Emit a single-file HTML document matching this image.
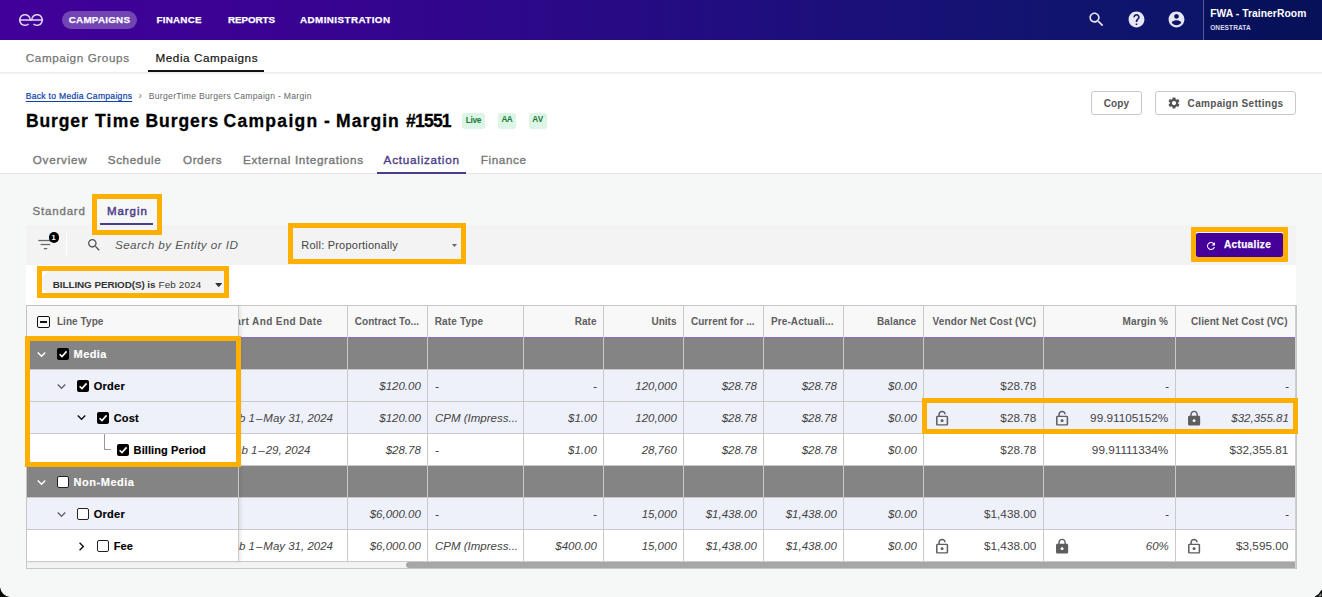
<!DOCTYPE html>
<html lang="en"><head><meta charset="utf-8"><title>Burger Time Burgers Campaign - Margin #1551</title>
<style>
*{box-sizing:border-box;margin:0;padding:0}
html,body{width:1322px;height:597px;overflow:hidden}
body{position:relative;background:#f6f7f7;font-family:"Liberation Sans",sans-serif;}
.a{position:absolute}
.t{position:absolute;white-space:nowrap;line-height:16px;height:16px}
svg{position:absolute;display:block;overflow:visible}
.nav{left:0;top:0;width:1322px;height:40px;background:linear-gradient(90deg,#41009a 0%,#390392 22%,#210d80 55%,#11146f 80%,#081563 100%)}
.pill{left:62px;top:11px;width:75px;height:18px;border-radius:9px;background:rgba(255,255,255,.27)}
.navdiv{left:1203px;top:0;width:1px;height:40px;background:rgba(255,255,255,.3)}
.subnav{left:0;top:40px;width:1322px;height:33px;background:#fff}
.subshadow{left:0;top:72px;width:1322px;height:3px;background:linear-gradient(180deg,rgba(0,0,0,.10),rgba(0,0,0,.04) 45%,rgba(0,0,0,0))}
.hdr{left:0;top:73px;width:1322px;height:101px;background:#fff;border-bottom:1px solid #e6e6e6}
.ul{height:2px}
.btn{border:1px solid #c8c8c8;border-radius:3px;background:#fff;height:24px;top:91px}
.badge{top:113px;height:16px;border-radius:3px;background:#dcf5e5}
.hl{border:5px solid #ffaf00;z-index:5}
.toolbar{left:26px;top:225px;width:1270px;height:40px;background:#f3f3f3}
.filterrow{left:26px;top:265px;width:1270px;height:41px;background:#fff}
.chip{left:42px;top:271px;width:188px;height:22px;border-radius:9px;background:#f3f3f3}
/* table */
.tbl{left:26px;top:305px;width:1271px;height:264px;border:1px solid #c6c6c6;background:#fff}
.row{left:27px;width:1269px;height:32px;border-bottom:1px solid #c9c9c9}
.thead{left:27px;top:306px;width:1269px;height:32px;background:#f8f8f8;border-bottom:1px solid #8d68c8}
.g{background:#848484}
.l{background:#eef0fa}
.w{background:#fff}
.vl{top:306px;width:1px;height:256px;background:#c9c9c9}
.pin{left:27px;top:306px;width:212px;height:256px;border-right:1px solid #c9c9c9;z-index:2;box-shadow:2px 0 3px rgba(0,0,0,.08)}
.cb{width:12px;height:12px;border-radius:2px;z-index:3}
.cb.on{background:#000}
.cb.off{background:#fff;border:1.3px solid #222}

</style></head>
<body>
<nav aria-label="Main navigation">
<!-- top navigation -->
<div class="a nav"></div>
<svg style="left:0;top:0" width="62" height="40" viewBox="0 0 62 40" fill="none" stroke="#e2d8f4" stroke-width="1.500" stroke-linecap="round">
  <path d="M19.700 20 H42.300"/>
  <path d="M30.300 20 A5.300 5.300 0 1 0 28.040 24.340"/>
  <path d="M31.700 20 A5.300 5.300 0 1 1 33.960 24.340"/>
</svg>
<div class="a pill"></div>
<svg style="left:1087px;top:10.400px" width="19" height="19" viewBox="0 0 24 24" fill="#e6e6f5"><path d="M15.5 14h-.79l-.28-.27C15.41 12.59 16 11.11 16 9.5 16 5.91 13.09 3 9.500 3S3 5.910 3 9.500 5.910 16 9.500 16c1.610 0 3.090-.59 4.230-1.570l.27.28v.79l5 4.990L20.490 19l-4.990-5zm-6 0C7.010 14 5 11.990 5 9.500S7.010 5 9.500 5 14 7.010 14 9.500 11.990 14 9.500 14z"/></svg>
<svg style="left:1127px;top:10.400px" width="19" height="19" viewBox="0 0 24 24" fill="#e6e6f5"><path d="M12 2C6.480 2 2 6.480 2 12s4.480 10 10 10 10-4.480 10-10S17.520 2 12 2zm1 17h-2v-2h2v2zm2.070-7.750l-.9.920C13.450 12.900 13 13.500 13 15h-2v-.5c0-1.100.45-2.100 1.170-2.830l1.240-1.260c.37-.36.59-.86.59-1.410 0-1.100-.9-2-2-2s-2 .9-2 2H8c0-2.210 1.790-4 4-4s4 1.790 4 4c0 .88-.36 1.680-.93 2.250z"/></svg>
<svg style="left:1167px;top:10.400px" width="19" height="19" viewBox="0 0 24 24" fill="#e6e6f5"><path d="M12 2C6.480 2 2 6.480 2 12s4.480 10 10 10 10-4.480 10-10S17.520 2 12 2zm0 3c1.660 0 3 1.340 3 3s-1.340 3-3 3-3-1.340-3-3 1.340-3 3-3zm0 14.200c-2.500 0-4.710-1.280-6-3.220.03-1.990 4-3.080 6-3.080 1.990 0 5.970 1.090 6 3.080-1.290 1.940-3.500 3.220-6 3.220z"/></svg>
<div class="a navdiv"></div>
<div class="a" style="left:1204px;top:0;width:118px;height:40px;background:rgba(0,8,60,.25)"></div>
<span class="t" style="top:11.90px;font-size:9.8px;color:#fff;font-weight:700;-webkit-text-stroke:0.25px currentColor;left:68.75px;letter-spacing:0.262px;">CAMPAIGNS</span>
<span class="t" style="top:11.90px;font-size:9.8px;color:#fff;font-weight:700;-webkit-text-stroke:0.25px currentColor;left:156.50px;letter-spacing:0.242px;">FINANCE</span>
<span class="t" style="top:11.90px;font-size:9.8px;color:#fff;font-weight:700;-webkit-text-stroke:0.25px currentColor;left:228.00px;letter-spacing:-0.060px;">REPORTS</span>
<span class="t" style="top:11.90px;font-size:9.8px;color:#fff;font-weight:700;-webkit-text-stroke:0.25px currentColor;left:300.00px;letter-spacing:0.447px;">ADMINISTRATION</span>
<span class="t" style="top:5.83px;font-size:10.3px;color:#fff;font-weight:700;left:1210.20px;letter-spacing:0.059px;">FWA - TrainerRoom</span>
<span class="t" style="top:20.15px;font-size:6.5px;color:#dcdcf2;font-weight:700;left:1210.20px;letter-spacing:0.114px;">ONESTRATA</span>
</nav>
<nav aria-label="Campaign sections">
<!-- sub navigation -->
<div class="a subnav"></div>
<div class="a ul" style="left:148px;top:70px;width:116px;background:#111"></div>
<span class="t" style="top:49.95px;font-size:11.7px;color:#757575;-webkit-text-stroke:0.25px currentColor;left:25.75px;letter-spacing:0.599px;">Campaign Groups</span>
<span class="t" style="top:49.95px;font-size:11.7px;color:#111;-webkit-text-stroke:0.2px currentColor;left:155.50px;letter-spacing:0.557px;">Media Campaigns</span>
</nav>
<header aria-label="Campaign header">
<!-- page header -->
<div class="a hdr"></div>
<div class="a subshadow"></div>
<div class="a badge" style="left:462px;width:23px"></div>
<div class="a badge" style="left:498px;width:18px"></div>
<div class="a badge" style="left:529px;width:18px"></div>
<div class="a btn" style="left:1091px;width:51px"></div>
<div class="a btn" style="left:1155px;width:141px"></div>
<svg style="left:1167.400px;top:96.400px" width="14" height="14" viewBox="0 0 24 24" fill="#555"><path d="M19.140 12.940c.04-.3.06-.61.06-.94 0-.32-.02-.64-.07-.94l2.030-1.580c.18-.14.23-.41.12-.61l-1.920-3.320c-.12-.22-.37-.29-.59-.22l-2.390.96c-.5-.38-1.030-.7-1.620-.94l-.36-2.540c-.04-.24-.24-.41-.48-.41h-3.840c-.24 0-.43.17-.47.41l-.36 2.540c-.59.24-1.130.57-1.620.94l-2.390-.96c-.22-.08-.47 0-.59.22L2.740 8.870c-.12.21-.08.47.12.61l2.030 1.580c-.05.3-.09.63-.09.94s.02.64.07.94l-2.030 1.580c-.18.14-.23.41-.12.61l1.920 3.320c.12.22.37.29.59.22l2.390-.96c.5.38 1.030.7 1.620.94l.36 2.540c.05.24.24.41.48.41h3.840c.24 0 .44-.17.47-.41l.36-2.540c.59-.24 1.130-.56 1.620-.94l2.390.96c.22.08.47 0 .59-.22l1.920-3.320c.12-.22.07-.47-.12-.61l-2.010-1.580zM12 15.600c-1.980 0-3.600-1.620-3.600-3.600s1.620-3.600 3.600-3.600 3.600 1.620 3.600 3.600-1.620 3.600-3.600 3.600z"/></svg>
<div class="a ul" style="left:377px;top:172px;width:89px;background:#4c3b88;z-index:2"></div>
<span class="t" style="top:87.62px;font-size:8.6px;color:#0f41ab;-webkit-text-stroke:0.2px currentColor;left:25.75px;letter-spacing:0.270px;text-decoration:underline;text-underline-offset:1.5px;">Back to Media Campaigns</span>
<span class="t" style="top:87.63px;font-size:10px;color:#777;left:138.50px;">›</span>
<span class="t" style="top:87.62px;font-size:8.6px;color:#666;left:148.75px;letter-spacing:0.292px;">BurgerTime Burgers Campaign - Margin</span>
<span class="t" style="top:112.94px;font-size:17.5px;color:#000;font-weight:700;-webkit-text-stroke:0.3px currentColor;left:0;"><span style="position:absolute;left:26.00px;top:0;letter-spacing:0.885px">Burger</span> <span style="position:absolute;left:95.00px;top:0;letter-spacing:1.223px">Time</span> <span style="position:absolute;left:145.50px;top:0;letter-spacing:0.948px">Burgers</span> <span style="position:absolute;left:223.50px;top:0;letter-spacing:1.313px">Campaign</span> <span style="position:absolute;left:324.00px;top:0;letter-spacing:0.000px">-</span> <span style="position:absolute;left:336.00px;top:0;letter-spacing:1.085px">Margin</span> <span style="position:absolute;left:406.00px;top:0;letter-spacing:-0.768px">#1551</span></span>
<span class="t" style="top:112.19px;font-size:8.4px;color:#1a7a3c;font-weight:700;left:465.70px;letter-spacing:-0.355px;">Live</span>
<span class="t" style="top:112.26px;font-size:8.2px;color:#1a7a3c;font-weight:700;left:501.40px;letter-spacing:-0.528px;">AA</span>
<span class="t" style="top:112.26px;font-size:8.2px;color:#1a7a3c;font-weight:700;left:532.30px;letter-spacing:0.034px;">AV</span>
<span class="t" style="top:152.25px;font-size:11.7px;color:#777;-webkit-text-stroke:0.35px currentColor;left:32.75px;letter-spacing:0.754px;">Overview</span>
<span class="t" style="top:152.25px;font-size:11.7px;color:#777;-webkit-text-stroke:0.35px currentColor;left:107.75px;letter-spacing:0.607px;">Schedule</span>
<span class="t" style="top:152.25px;font-size:11.7px;color:#777;-webkit-text-stroke:0.35px currentColor;left:183.00px;letter-spacing:0.553px;">Orders</span>
<span class="t" style="top:152.25px;font-size:11.7px;color:#777;-webkit-text-stroke:0.35px currentColor;left:243.00px;letter-spacing:0.640px;">External Integrations</span>
<span class="t" style="top:152.25px;font-size:11.7px;color:#4c3b88;-webkit-text-stroke:0.35px currentColor;left:383.60px;letter-spacing:0.760px;">Actualization</span>
<span class="t" style="top:152.25px;font-size:11.7px;color:#777;-webkit-text-stroke:0.35px currentColor;left:480.70px;letter-spacing:0.618px;">Finance</span>
<span class="t" style="top:95.53px;font-size:10px;color:#555;font-weight:700;left:1103.80px;letter-spacing:0.067px;">Copy</span>
<span class="t" style="top:95.53px;font-size:10px;color:#555;font-weight:700;left:1187.60px;letter-spacing:0.314px;">Campaign Settings</span>
</header>
<section aria-label="Actualization toolbar">
<!-- sub tabs -->
<div class="a ul" style="left:100px;top:223px;width:53px;background:#4c3b88;z-index:6"></div>
<div class="a hl" style="left:92px;top:194px;width:70px;height:41px"></div>

<!-- toolbar -->
<div class="a toolbar"></div>
<svg style="left:36px;top:236px" width="20" height="16" viewBox="36 236 20 16" fill="#686868"><rect x="38.300" y="239.900" width="14.200" height="1.250"/><rect x="40.600" y="243.900" width="9.600" height="1.250"/><rect x="43.800" y="248" width="3.400" height="1.250"/></svg>
<div class="a" style="left:48.500px;top:232.300px;width:10.400px;height:10.400px;border-radius:50%;background:#000"></div>
<span class="t" style="left:51.600px;top:229.600px;font-size:7.500px;font-weight:700;color:#fff">1</span>
<div class="a" style="left:66px;top:233px;width:1px;height:24px;background:#fff"></div>
<svg style="left:86px;top:237px" width="16" height="16" viewBox="0 0 24 24" fill="#555"><path d="M15.500 14h-.79l-.28-.27C15.410 12.590 16 11.110 16 9.500 16 5.910 13.090 3 9.500 3S3 5.910 3 9.500 5.910 16 9.500 16c1.610 0 3.090-.59 4.230-1.570l.27.28v.79l5 4.990L20.490 19l-4.990-5zm-6 0C7.010 14 5 11.990 5 9.500S7.010 5 9.500 5 14 7.010 14 9.500 11.990 14 9.500 14z"/></svg>
<div class="a hl" style="left:288px;top:223px;width:178px;height:41px"></div>
<svg style="left:451.500px;top:244px" width="5" height="3" viewBox="0 0 10 6" fill="#666"><path d="M0 0h10L5 6z"/></svg>
<div class="a" style="left:1196px;top:233px;width:87px;height:24px;border-radius:2px;background:#440099"></div>
<div class="a hl" style="left:1191px;top:227px;width:97px;height:35px;border-radius:1px"></div>
<svg style="left:1204.800px;top:239.500px" width="12" height="12" viewBox="0 0 24 24" fill="#fff"><path d="M17.650 6.350C16.200 4.900 14.210 4 12 4c-4.420 0-7.990 3.580-7.990 8s3.570 8 7.990 8c3.730 0 6.840-2.550 7.730-6h-2.080c-.82 2.330-3.040 4-5.650 4-3.310 0-6-2.690-6-6s2.690-6 6-6c1.660 0 3.140.69 4.220 1.780L13 11h7V4l-2.350 2.350z"/></svg>

<!-- filter row -->
<div class="a filterrow"></div>
<div class="a chip"></div>
<svg style="left:215.400px;top:283px" width="7.400" height="4.200" viewBox="0 0 10 6" fill="#333"><path d="M0.600 0h8.800q.9 0 .3.700L5.600 5.500q-.6.600-1.200 0L.3.700Q-.3 0 .6 0z"/></svg>
<div class="a hl" style="left:37px;top:266px;width:192px;height:32px"></div>
<span class="t" style="top:202.92px;font-size:11.5px;color:#777;-webkit-text-stroke:0.35px currentColor;left:32.50px;letter-spacing:0.816px;">Standard</span>
<span class="t" style="top:202.92px;font-size:11.5px;color:#4c3b88;-webkit-text-stroke:0.45px currentColor;left:107.00px;letter-spacing:0.929px;">Margin</span>
<span class="t" style="top:236.95px;font-size:11.7px;color:#555;font-style:italic;left:114.90px;letter-spacing:0.448px;">Search by Entity or ID</span>
<span class="t" style="top:237.29px;font-size:11px;color:#444;left:301.30px;letter-spacing:0.220px;">Roll: Proportionally</span>
<span class="t" style="top:236.53px;font-size:10px;color:#fff;font-weight:700;-webkit-text-stroke:0.25px currentColor;left:1224.00px;letter-spacing:0.349px;">Actualize</span>
<span class="t" style="top:276.67px;font-size:9.9px;color:#333;font-weight:700;left:52.80px;letter-spacing:-0.082px;">BILLING PERIOD(S) is</span>
<span class="t" style="top:276.67px;font-size:9.9px;color:#333;left:158.60px;letter-spacing:0.124px;">Feb 2024</span>
</section>
<main aria-label="Actualization grid">
<!-- table -->
<div class="a tbl"></div>
<div class="a thead"></div>
<div class="a row g" style="top:338px"></div>
<div class="a row l" style="top:370px"></div>
<div class="a row l" style="top:402px"></div>
<div class="a row w" style="top:434px"></div>
<div class="a row g" style="top:466px"></div>
<div class="a row l" style="top:498px"></div>
<div class="a row w" style="top:530px"></div>
<div class="a vl" style="left:347px"></div>
<div class="a vl" style="left:427px"></div>
<div class="a vl" style="left:523px"></div>
<div class="a vl" style="left:603px"></div>
<div class="a vl" style="left:683px"></div>
<div class="a vl" style="left:763px"></div>
<div class="a vl" style="left:843px"></div>
<div class="a vl" style="left:923px"></div>
<div class="a vl" style="left:1043px"></div>
<div class="a vl" style="left:1175px"></div>
<div class="a" style="left:1295px;top:306px;width:1px;height:262px;background:#cfcfcf;z-index:1"></div>
<!-- horizontal scrollbar -->
<div class="a" style="left:27px;top:562px;width:1269px;height:6px;background:#f3f3f3"></div>
<div class="a" style="left:406px;top:562px;width:890px;height:6px;background:#a6a6a6;border-radius:3px 0 0 3px"></div>

<!-- pinned column -->
<div class="a pin">
  <div class="a" style="left:0;top:0;width:211px;height:32px;background:#f8f8f8;border-bottom:1px solid #c9c9c9"></div>
  <div class="a g" style="left:0;top:32px;width:211px;height:32px;border-bottom:1px solid #c9c9c9"></div>
  <div class="a l" style="left:0;top:64px;width:211px;height:32px;border-bottom:1px solid #c9c9c9"></div>
  <div class="a l" style="left:0;top:96px;width:211px;height:32px;border-bottom:1px solid #c9c9c9"></div>
  <div class="a w" style="left:0;top:128px;width:211px;height:32px;border-bottom:1px solid #c9c9c9"></div>
  <div class="a g" style="left:0;top:160px;width:211px;height:32px;border-bottom:1px solid #c9c9c9"></div>
  <div class="a l" style="left:0;top:192px;width:211px;height:32px;border-bottom:1px solid #c9c9c9"></div>
  <div class="a w" style="left:0;top:224px;width:211px;height:32px;border-bottom:1px solid #c9c9c9"></div>
</div>
<!-- header checkbox (indeterminate) -->
<div class="a" style="left:37px;top:316px;width:13px;height:12px;border:1.400px solid #111;border-radius:2px;z-index:3"></div>
<div class="a" style="left:40px;top:321.300px;width:7px;height:1.500px;background:#111;z-index:3"></div>

<!-- tree: chevrons + checkboxes -->
<svg style="left:33.3px;top:345.6px;z-index:3" width="17" height="17" viewBox="0 0 24 24" fill="#fff"><path d="M16.590 8.590L12 13.170 7.410 8.590 6 10l6 6 6-6z"/></svg>
<svg style="left:53.2px;top:377.6px;z-index:3" width="17" height="17" viewBox="0 0 24 24" fill="#666"><path d="M16.590 8.590L12 13.170 7.410 8.590 6 10l6 6 6-6z"/></svg>
<svg style="left:73.2px;top:409.3px;z-index:3" width="17" height="17" viewBox="0 0 24 24" fill="#111"><path d="M16.590 8.590L12 13.170 7.410 8.590 6 10l6 6 6-6z"/></svg>
<svg style="left:33.3px;top:473.6px;z-index:3" width="17" height="17" viewBox="0 0 24 24" fill="#fff"><path d="M16.590 8.590L12 13.170 7.410 8.590 6 10l6 6 6-6z"/></svg>
<svg style="left:53.2px;top:505.6px;z-index:3" width="17" height="17" viewBox="0 0 24 24" fill="#666"><path d="M16.590 8.590L12 13.170 7.410 8.590 6 10l6 6 6-6z"/></svg>
<svg style="left:73.0px;top:537.5px;z-index:3" width="17" height="17" viewBox="0 0 24 24" fill="#111"><path d="M10 6L8.590 7.410 13.170 12l-4.580 4.590L10 18l6-6z"/></svg>
<div class="a cb on" style="left:57px;top:348px"></div>
<svg style="left:58px;top:349px;z-index:4" width="10" height="10" viewBox="0 0 10 10" fill="none" stroke="#fff" stroke-width="1.600"><path d="M1.600 5.200 L4 7.600 L8.600 2.400"/></svg>

<div class="a cb on" style="left:77px;top:380px"></div>
<svg style="left:78px;top:381px;z-index:4" width="10" height="10" viewBox="0 0 10 10" fill="none" stroke="#fff" stroke-width="1.600"><path d="M1.600 5.200 L4 7.600 L8.600 2.400"/></svg>

<div class="a cb on" style="left:97px;top:412px"></div>
<svg style="left:98px;top:413px;z-index:4" width="10" height="10" viewBox="0 0 10 10" fill="none" stroke="#fff" stroke-width="1.600"><path d="M1.600 5.200 L4 7.600 L8.600 2.400"/></svg>

<div class="a" style="left:103.500px;top:434px;width:7px;height:16px;border-left:1px solid #999;border-bottom:1px solid #999;z-index:3"></div>
<div class="a cb on" style="left:117px;top:444px"></div>
<svg style="left:118px;top:445px;z-index:4" width="10" height="10" viewBox="0 0 10 10" fill="none" stroke="#fff" stroke-width="1.600"><path d="M1.600 5.200 L4 7.600 L8.600 2.400"/></svg>

<div class="a cb off" style="left:57px;top:476px"></div>

<div class="a cb off" style="left:77px;top:508px"></div>

<div class="a cb off" style="left:97px;top:540px"></div>

<!-- highlight boxes on table -->
<div class="a hl" style="left:25px;top:336px;width:216px;height:131px"></div>
<div class="a hl" style="left:922px;top:398px;width:376px;height:36px"></div>

<!-- lock icons -->
<svg style="left:932.80px;top:409.55px" width="18.2" height="17" viewBox="0 0 24 24" preserveAspectRatio="none" fill="#5e5e5e"><path transform="translate(24 0) scale(-1 1)" d="M18 8h-1V6c0-2.760-2.240-5-5-5S7 3.240 7 6h2c0-1.660 1.340-3 3-3s3 1.340 3 3v2H6c-1.100 0-2 .9-2 2v10c0 1.100.9 2 2 2h12c1.100 0 2-.9 2-2V10c0-1.100-.9-2-2-2zm0 12H6V10h12v10zm-6-3c1.100 0 2-.9 2-2s-.9-2-2-2-2 .9-2 2 .9 2 2 2z"/></svg>
<svg style="left:1052.70px;top:409.55px" width="18.2" height="17" viewBox="0 0 24 24" preserveAspectRatio="none" fill="#5e5e5e"><path transform="translate(24 0) scale(-1 1)" d="M18 8h-1V6c0-2.760-2.240-5-5-5S7 3.240 7 6h2c0-1.660 1.340-3 3-3s3 1.340 3 3v2H6c-1.100 0-2 .9-2 2v10c0 1.100.9 2 2 2h12c1.100 0 2-.9 2-2V10c0-1.100-.9-2-2-2zm0 12H6V10h12v10zm-6-3c1.100 0 2-.9 2-2s-.9-2-2-2-2 .9-2 2 .9 2 2 2z"/></svg>
<svg style="left:1184.90px;top:409.55px" width="18.2" height="17" viewBox="0 0 24 24" preserveAspectRatio="none" fill="#5e5e5e"><path d="M18 8h-1V6c0-2.760-2.240-5-5-5S7 3.240 7 6v2H6c-1.100 0-2 .9-2 2v10c0 1.100.9 2 2 2h12c1.100 0 2-.9 2-2V10c0-1.100-.9-2-2-2zm-6 9c-1.100 0-2-.9-2-2s.9-2 2-2 2 .9 2 2-.9 2-2 2zm3.100-9H8.900V6c0-1.710 1.390-3.100 3.100-3.100 1.710 0 3.100 1.390 3.100 3.100v2z"/></svg>
<svg style="left:932.80px;top:537.55px" width="18.2" height="17" viewBox="0 0 24 24" preserveAspectRatio="none" fill="#5e5e5e"><path transform="translate(24 0) scale(-1 1)" d="M18 8h-1V6c0-2.760-2.240-5-5-5S7 3.240 7 6h2c0-1.660 1.340-3 3-3s3 1.340 3 3v2H6c-1.100 0-2 .9-2 2v10c0 1.100.9 2 2 2h12c1.100 0 2-.9 2-2V10c0-1.100-.9-2-2-2zm0 12H6V10h12v10zm-6-3c1.100 0 2-.9 2-2s-.9-2-2-2-2 .9-2 2 .9 2 2 2z"/></svg>
<svg style="left:1052.70px;top:537.55px" width="18.2" height="17" viewBox="0 0 24 24" preserveAspectRatio="none" fill="#5e5e5e"><path d="M18 8h-1V6c0-2.760-2.240-5-5-5S7 3.240 7 6v2H6c-1.100 0-2 .9-2 2v10c0 1.100.9 2 2 2h12c1.100 0 2-.9 2-2V10c0-1.100-.9-2-2-2zm-6 9c-1.100 0-2-.9-2-2s.9-2 2-2 2 .9 2 2-.9 2-2 2zm3.100-9H8.900V6c0-1.710 1.390-3.100 3.100-3.100 1.710 0 3.100 1.390 3.100 3.100v2z"/></svg>
<svg style="left:1184.90px;top:537.55px" width="18.2" height="17" viewBox="0 0 24 24" preserveAspectRatio="none" fill="#5e5e5e"><path transform="translate(24 0) scale(-1 1)" d="M18 8h-1V6c0-2.760-2.240-5-5-5S7 3.240 7 6h2c0-1.660 1.340-3 3-3s3 1.340 3 3v2H6c-1.100 0-2 .9-2 2v10c0 1.100.9 2 2 2h12c1.100 0 2-.9 2-2V10c0-1.100-.9-2-2-2zm0 12H6V10h12v10zm-6-3c1.100 0 2-.9 2-2s-.9-2-2-2-2 .9-2 2 .9 2 2 2z"/></svg>
<span class="t" style="top:313.64px;font-size:10px;color:#5e5e5e;font-weight:700;left:56.90px;letter-spacing:0.070px;z-index:3;">Line Type</span>
<span class="t" style="top:313.64px;font-size:10px;color:#5e5e5e;font-weight:700;left:354.80px;letter-spacing:0.038px;">Contract To...</span>
<span class="t" style="top:313.64px;font-size:10px;color:#5e5e5e;font-weight:700;left:434.70px;letter-spacing:0.155px;">Rate Type</span>
<span class="t" style="top:313.64px;font-size:10px;color:#5e5e5e;font-weight:700;right:725.50px;">Rate</span>
<span class="t" style="top:313.64px;font-size:10px;color:#5e5e5e;font-weight:700;right:645.50px;">Units</span>
<span class="t" style="top:313.64px;font-size:10px;color:#5e5e5e;font-weight:700;left:691.00px;letter-spacing:0.011px;">Current for ...</span>
<span class="t" style="top:313.64px;font-size:10px;color:#5e5e5e;font-weight:700;left:771.00px;letter-spacing:0.105px;">Pre-Actuali...</span>
<span class="t" style="top:313.64px;font-size:10px;color:#5e5e5e;font-weight:700;left:877.00px;letter-spacing:0.107px;">Balance</span>
<span class="t" style="top:313.64px;font-size:10px;color:#5e5e5e;font-weight:700;left:932.50px;letter-spacing:0.125px;">Vendor Net Cost (VC)</span>
<span class="t" style="top:313.64px;font-size:10px;color:#5e5e5e;font-weight:700;left:1122.50px;letter-spacing:0.150px;">Margin %</span>
<span class="t" style="top:313.64px;font-size:10px;color:#5e5e5e;font-weight:700;left:1191.00px;letter-spacing:0.079px;">Client Net Cost (VC)</span>
<span class="t" style="top:313.64px;font-size:10px;color:#5e5e5e;font-weight:700;right:999.60px;z-index:1;letter-spacing:.4px;">Start And End Date</span>
<span class="t" style="top:378.02px;font-size:11.5px;color:#444;font-style:italic;right:901.20px;">$120.00</span>
<span class="t" style="top:378.02px;font-size:11.5px;color:#444;font-style:italic;left:435.00px;">-</span>
<span class="t" style="top:378.02px;font-size:11.5px;color:#444;font-style:italic;right:725.20px;">-</span>
<span class="t" style="top:378.02px;font-size:11.5px;color:#444;font-style:italic;right:645.20px;">120,000</span>
<span class="t" style="top:378.02px;font-size:11.5px;color:#444;font-style:italic;right:565.20px;">$28.78</span>
<span class="t" style="top:378.02px;font-size:11.5px;color:#444;font-style:italic;right:485.20px;">$28.78</span>
<span class="t" style="top:378.02px;font-size:11.5px;color:#444;font-style:italic;right:405.20px;">$0.00</span>
<span class="t" style="top:377.93px;font-size:11.75px;color:#444;right:285.70px;">$28.78</span>
<span class="t" style="top:378.02px;font-size:11.5px;color:#444;font-style:italic;right:153.20px;">-</span>
<span class="t" style="top:378.02px;font-size:11.5px;color:#444;font-style:italic;right:33.20px;">-</span>
<span class="t" style="top:410.02px;font-size:11.5px;color:#444;font-style:italic;right:989.00px;z-index:1;">Feb 1 – May 31, 2024</span>
<span class="t" style="top:410.02px;font-size:11.5px;color:#444;font-style:italic;right:901.20px;">$120.00</span>
<span class="t" style="top:410.02px;font-size:11.5px;color:#444;font-style:italic;left:435.00px;">CPM (Impress...</span>
<span class="t" style="top:410.02px;font-size:11.5px;color:#444;font-style:italic;right:725.20px;">$1.00</span>
<span class="t" style="top:410.02px;font-size:11.5px;color:#444;font-style:italic;right:645.20px;">120,000</span>
<span class="t" style="top:410.02px;font-size:11.5px;color:#444;font-style:italic;right:565.20px;">$28.78</span>
<span class="t" style="top:410.02px;font-size:11.5px;color:#444;font-style:italic;right:485.20px;">$28.78</span>
<span class="t" style="top:410.02px;font-size:11.5px;color:#444;font-style:italic;right:405.20px;">$0.00</span>
<span class="t" style="top:409.93px;font-size:11.75px;color:#444;right:285.70px;">$28.78</span>
<span class="t" style="top:409.93px;font-size:11.75px;color:#444;right:153.70px;">99.91105152%</span>
<span class="t" style="top:410.02px;font-size:11.5px;color:#444;font-style:italic;right:33.20px;">$32,355.81</span>
<span class="t" style="top:442.02px;font-size:11.5px;color:#444;font-style:italic;right:1011.50px;z-index:1;">Feb 1 – 29, 2024</span>
<span class="t" style="top:442.02px;font-size:11.5px;color:#444;font-style:italic;right:901.20px;">$28.78</span>
<span class="t" style="top:442.02px;font-size:11.5px;color:#444;font-style:italic;left:435.00px;">-</span>
<span class="t" style="top:442.02px;font-size:11.5px;color:#444;font-style:italic;right:725.20px;">$1.00</span>
<span class="t" style="top:442.02px;font-size:11.5px;color:#444;font-style:italic;right:645.20px;">28,760</span>
<span class="t" style="top:442.02px;font-size:11.5px;color:#444;font-style:italic;right:565.20px;">$28.78</span>
<span class="t" style="top:442.02px;font-size:11.5px;color:#444;font-style:italic;right:485.20px;">$28.78</span>
<span class="t" style="top:442.02px;font-size:11.5px;color:#444;font-style:italic;right:405.20px;">$0.00</span>
<span class="t" style="top:441.93px;font-size:11.75px;color:#444;right:285.70px;">$28.78</span>
<span class="t" style="top:441.93px;font-size:11.75px;color:#444;right:153.70px;">99.91111334%</span>
<span class="t" style="top:441.93px;font-size:11.75px;color:#444;right:33.70px;">$32,355.81</span>
<span class="t" style="top:506.02px;font-size:11.5px;color:#444;font-style:italic;right:901.20px;">$6,000.00</span>
<span class="t" style="top:506.02px;font-size:11.5px;color:#444;font-style:italic;left:435.00px;">-</span>
<span class="t" style="top:506.02px;font-size:11.5px;color:#444;font-style:italic;right:725.20px;">-</span>
<span class="t" style="top:506.02px;font-size:11.5px;color:#444;font-style:italic;right:645.20px;">15,000</span>
<span class="t" style="top:506.02px;font-size:11.5px;color:#444;font-style:italic;right:565.20px;">$1,438.00</span>
<span class="t" style="top:506.02px;font-size:11.5px;color:#444;font-style:italic;right:485.20px;">$1,438.00</span>
<span class="t" style="top:506.02px;font-size:11.5px;color:#444;font-style:italic;right:405.20px;">$0.00</span>
<span class="t" style="top:505.93px;font-size:11.75px;color:#444;right:285.70px;">$1,438.00</span>
<span class="t" style="top:506.02px;font-size:11.5px;color:#444;font-style:italic;right:153.20px;">-</span>
<span class="t" style="top:506.02px;font-size:11.5px;color:#444;font-style:italic;right:33.20px;">-</span>
<span class="t" style="top:538.02px;font-size:11.5px;color:#444;font-style:italic;right:989.00px;z-index:1;">Feb 1 – May 31, 2024</span>
<span class="t" style="top:538.02px;font-size:11.5px;color:#444;font-style:italic;right:901.20px;">$6,000.00</span>
<span class="t" style="top:538.02px;font-size:11.5px;color:#444;font-style:italic;left:435.00px;">CPM (Impress...</span>
<span class="t" style="top:538.02px;font-size:11.5px;color:#444;font-style:italic;right:725.20px;">$400.00</span>
<span class="t" style="top:538.02px;font-size:11.5px;color:#444;font-style:italic;right:645.20px;">15,000</span>
<span class="t" style="top:538.02px;font-size:11.5px;color:#444;font-style:italic;right:565.20px;">$1,438.00</span>
<span class="t" style="top:538.02px;font-size:11.5px;color:#444;font-style:italic;right:485.20px;">$1,438.00</span>
<span class="t" style="top:538.02px;font-size:11.5px;color:#444;font-style:italic;right:405.20px;">$0.00</span>
<span class="t" style="top:537.93px;font-size:11.75px;color:#444;right:285.70px;">$1,438.00</span>
<span class="t" style="top:538.02px;font-size:11.5px;color:#444;font-style:italic;right:153.20px;">60%</span>
<span class="t" style="top:537.93px;font-size:11.75px;color:#444;right:33.70px;">$3,595.00</span>
<span class="t" style="top:345.99px;font-size:11px;color:#fff;font-weight:700;-webkit-text-stroke:0.15px currentColor;left:73.60px;letter-spacing:0.378px;z-index:3;">Media</span>
<span class="t" style="top:377.99px;font-size:11px;color:#000;font-weight:700;-webkit-text-stroke:0.15px currentColor;left:93.70px;letter-spacing:0.258px;z-index:3;">Order</span>
<span class="t" style="top:409.99px;font-size:11px;color:#000;font-weight:700;-webkit-text-stroke:0.15px currentColor;left:113.70px;letter-spacing:0.182px;z-index:3;">Cost</span>
<span class="t" style="top:441.99px;font-size:11px;color:#000;font-weight:700;-webkit-text-stroke:0.15px currentColor;left:133.60px;letter-spacing:0.092px;z-index:3;">Billing Period</span>
<span class="t" style="top:473.99px;font-size:11px;color:#fff;font-weight:700;-webkit-text-stroke:0.15px currentColor;left:73.60px;letter-spacing:0.521px;z-index:3;">Non-Media</span>
<span class="t" style="top:505.99px;font-size:11px;color:#000;font-weight:700;-webkit-text-stroke:0.15px currentColor;left:93.70px;letter-spacing:0.258px;z-index:3;">Order</span>
<span class="t" style="top:537.99px;font-size:11px;color:#000;font-weight:700;-webkit-text-stroke:0.15px currentColor;left:113.70px;letter-spacing:0.166px;z-index:3;">Fee</span>
</main>
<div>
<!-- screen corners -->
<svg style="left:0;top:583px" width="14" height="14" viewBox="0 583 14 14"><path d="M0 587.200 A12.200 12.200 0 0 0 9.800 597 L0 597 Z" fill="#070a04"/></svg>
<svg style="left:1308px;top:583px" width="14" height="14" viewBox="1308 583 14 14"><path d="M1322 590.400 A13.200 13.200 0 0 1 1315.400 597 L1322 597 Z" fill="#9a9a9a" stroke="#111" stroke-width="1.500"/></svg>

</div>
</body></html>
